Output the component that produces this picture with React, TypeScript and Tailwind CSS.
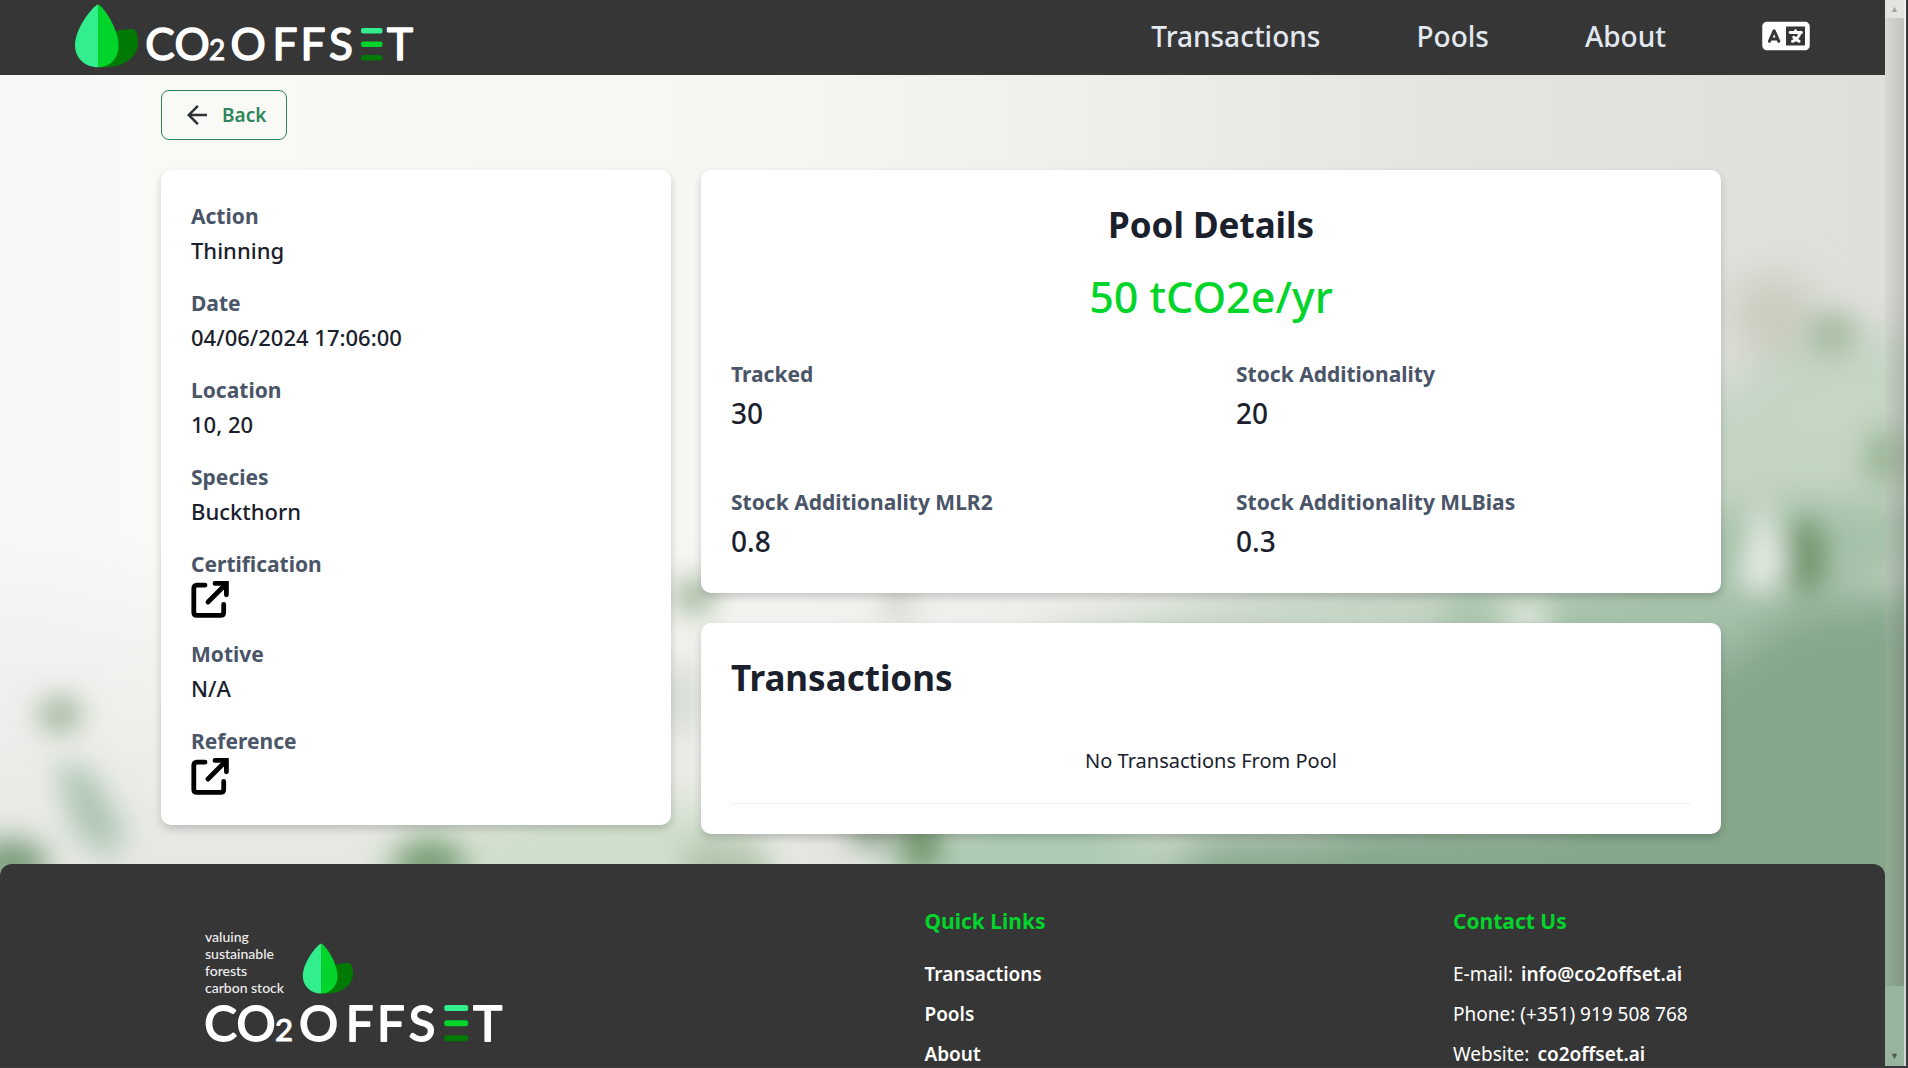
import type { ReactNode } from "react";
import { MdArrowBack } from "react-icons/md";
import { FaLanguage } from "react-icons/fa6";

function Backdrop() {
  return (
    <svg
      aria-hidden="true"
      className="absolute inset-0 h-full w-full"
      viewBox="0 0 1908 1068"
      preserveAspectRatio="none"
    >
      <defs>
        <linearGradient id="sky" x1="0" y1="0" x2="1" y2="0">
          <stop offset="0" stopColor="#f6f7f7" />
          <stop offset="0.08" stopColor="#f9f9f6" />
          <stop offset="0.4" stopColor="#f6f6f2" />
          <stop offset="0.6" stopColor="#edeeea" />
          <stop offset="0.75" stopColor="#e3e5e0" />
          <stop offset="1" stopColor="#dedfda" />
        </linearGradient>
        <linearGradient id="mist" x1="0" y1="0" x2="0" y2="1">
          <stop offset="0.5" stopColor="#e6e8e2" stopOpacity="0" />
          <stop offset="0.82" stopColor="#e4e7e1" stopOpacity="1" />
        </linearGradient>
        <filter id="b12" x="-50%" y="-50%" width="200%" height="200%">
          <feGaussianBlur stdDeviation="14" />
        </filter>
        <filter id="b24" x="-50%" y="-50%" width="200%" height="200%">
          <feGaussianBlur stdDeviation="22" />
        </filter>
      </defs>
      <rect width="1908" height="1068" fill="url(#sky)" />
      <rect width="1908" height="1068" fill="url(#mist)" />
      <g filter="url(#b24)">
        <path d="M1980 320 L1900 335 L1820 325 L1720 390 L1600 430 L1400 560 L1040 640 L950 900 L1980 900Z" fill="#c5d5c4" />
        <path d="M380 850 L620 790 L760 830 L760 900 L380 900Z" fill="#cfdfca" />
        <path d="M900 840 L1060 780 L1200 900 L880 900Z" fill="#aecab2" />
        <path d="M1980 500 L1770 500 L1700 520 L1600 580 L1440 620 L1300 900 L1980 900Z" fill="#a6c1a9" />
        <path d="M1980 595 L1800 610 L1720 660 L1560 820 L1200 840 L1150 920 L1300 1150 L1980 1150Z" fill="#86a78b" />
        <ellipse cx="1775" cy="315" rx="42" ry="40" fill="#c9cbbc" />
      </g>
      <g filter="url(#b12)">
        <ellipse cx="1834" cy="335" rx="24" ry="22" fill="#a4ba9f" />
        <path d="M1800 400 Q1840 365 1900 380 L1870 440 L1760 440Z" fill="#c4d6c4" />
        <ellipse cx="1888" cy="458" rx="22" ry="30" fill="#9ab694" />
        <ellipse cx="1808" cy="558" rx="19" ry="38" fill="#6d9269" />
        <path d="M1762 490 L1788 560 L1774 594 L1740 588Z" fill="#e8eee6" />
        <path d="M1840 585 L1908 555 L1908 585Z" fill="#bccbb9" />
        <ellipse cx="1528" cy="622" rx="24" ry="24" fill="#d9e5d7" />
        <ellipse cx="1470" cy="615" rx="18" ry="26" fill="#aac4ac" />
        <ellipse cx="695" cy="597" rx="20" ry="18" fill="#9bb394" />
        <ellipse cx="900" cy="605" rx="14" ry="20" fill="#cfd2c8" />
        <ellipse cx="682" cy="700" rx="12" ry="40" fill="#ccd6cb" />
        <ellipse cx="60" cy="716" rx="22" ry="18" fill="#9fb398" />
        <path d="M55 765 L88 768 L125 830 L112 862 L75 835Z" fill="#aec5b4" />
        <ellipse cx="10" cy="866" rx="38" ry="26" fill="#7d9e7e" />
        <ellipse cx="430" cy="868" rx="36" ry="28" fill="#7d9f7a" />
        <path d="M690 840 L760 850 L780 900 L680 900Z" fill="#b2c3ac" />
        <ellipse cx="872" cy="835" rx="28" ry="14" fill="#859e84" />
        <ellipse cx="922" cy="846" rx="20" ry="26" fill="#6d9067" />
        <path d="M790 830 L825 830 L870 880 L810 880Z" fill="#e2e5de" />
      </g>
    </svg>
  );
}

function Leaf({ className }: { className: string }) {
  return (
    <svg aria-hidden="true" className={className} viewBox="0 0 64 64">
      <path d="M24 63.3h8C48 63.3 64 54 64 38.500C64 32 62 25 59 25C54 25 46 26 42 27Z" fill="#007a04" />
      <path d="M24 .5C29 2 44.500 24 44.500 42C44.500 54 36 63.300 24 63.300Z" fill="#02d42b" />
      <path d="M24 .5C19 2 1 24 1 41C1 54 11 63.300 24 63.300Z" fill="#33ee8c" />
    </svg>
  );
}

const LETTERS: [string, number][] = [
  ["C", 14],
  ["O", 46],
  ["O", 102],
  ["F", 139],
  ["F", 167],
  ["S", 195],
  ["T", 254],
];

function Wordmark({ className }: { className: string }) {
  return (
    <svg role="img" aria-label="CO2 Offset" className={"overflow-visible " + className} viewBox="0 0 266 34">
      <g
        fill="#fff"
        stroke="#fff"
        strokeWidth="1.600"
        strokeLinejoin="round"
        textAnchor="middle"
        fontFamily="Lato, sans-serif"
        fontSize="44"
      >
        {LETTERS.map(([letter, x]) => (
          <text key={x} x={x} y="33">
            {letter}
          </text>
        ))}
        <text x="71" y="33" fontSize="28" strokeWidth="1">
          2
        </text>
      </g>
      <rect x="215" y="1" width="21.500" height="5.400" rx="2" fill="#33ee8c" />
      <rect x="215" y="14.500" width="21.500" height="5.400" rx="2" fill="#02d42b" />
      <rect x="215" y="28" width="21.500" height="5.400" rx="2" fill="#007a04" />
    </svg>
  );
}

function ExternalLinkIcon() {
  return (
    <svg
      aria-hidden="true"
      className="h-[37px] w-[38px]"
      viewBox="0 0 38 37"
      fill="none"
      stroke="#000"
      strokeWidth="4.800"
      strokeLinecap="round"
    >
      <path d="M14 4.200H6Q2.800 4.200 2.800 7.400V31.200Q2.800 34.400 6 34.400H29.500Q32.700 34.400 32.700 31.200V23.500" />
      <path d="M17 21L34 4" />
      <path d="M24 2.400H35.400V13.800" />
    </svg>
  );
}

function Card({ children }: { children: ReactNode }) {
  return <section className="rounded-[10px] bg-white p-[30px] shadow-[0_4px_8px_rgba(0,0,0,0.18)]">{children}</section>;
}

function Field({ label, value }: { label: string; value?: string }) {
  return (
    <div>
      <dt className="text-[21px] leading-[33px] font-bold text-[#4a5568]">{label}</dt>
      <dd className="text-[22px] leading-[34px] font-medium">
        {value ?? (
          <a href="#" aria-label={label} className="block w-fit">
            <ExternalLinkIcon />
          </a>
        )}
      </dd>
    </div>
  );
}

function Stat({ label, value }: { label: string; value: string }) {
  return (
    <div>
      <dt className="text-[21px] leading-[34px] font-bold text-[#4a5568]">{label}</dt>
      <dd className="text-[28px] leading-[44px] font-medium">{value}</dd>
    </div>
  );
}

const LINKS = ["Transactions", "Pools", "About"];

export default function App() {
  return (
    <div className="relative isolate flex h-screen overflow-hidden border-r-2 border-b-2 border-[#3a3a3e] font-['Noto_Sans',sans-serif] text-[#1a202c]">
      <Backdrop />
      <div className="relative flex min-w-0 flex-1 flex-col">
        <header className="flex h-[75px] shrink-0 items-center justify-between bg-[#363636] pr-[75px] pb-[3px] pl-[74px]">
          <a href="#" className="flex items-end gap-2">
            <Leaf className="size-[64px]" />
            <Wordmark className="mb-[7px] w-[266px]" />
          </a>
          <nav className="flex items-center gap-24 text-[28px] font-medium text-[#e2e8f0]">
            {LINKS.map((link) => (
              <a key={link} href="#">
                {link}
              </a>
            ))}
            <button type="button" aria-label="Change language" className="text-white">
              <FaLanguage className="h-[38px] w-12" />
            </button>
          </nav>
        </header>

        <main className="pt-[15px] pr-[164px] pb-[30px] pl-[161px]">
          <button
            type="button"
            className="flex h-[50px] items-center gap-[10px] rounded-lg border border-[#2f855a] px-5 text-[19px] font-semibold text-[#2f855a]"
          >
            <MdArrowBack className="size-[30px] text-[#2d3332]" />
            Back
          </button>

          <div className="mt-[30px] grid grid-cols-[1fr_2fr] items-start gap-[30px]">
            <Card>
              <dl className="flex flex-col gap-5">
                <Field label="Action" value="Thinning" />
                <Field label="Date" value="04/06/2024 17:06:00" />
                <Field label="Location" value="10, 20" />
                <Field label="Species" value="Buckthorn" />
                <Field label="Certification" />
                <Field label="Motive" value="N/A" />
                <Field label="Reference" />
              </dl>
            </Card>

            <div className="flex flex-col gap-[30px]">
              <Card>
                <h1 className="text-center text-[35px] leading-[50px] font-bold">Pool Details</h1>
                <p className="mt-3 text-center text-[43px] leading-[70px] font-medium text-[#02d42b]">50 tCO2e/yr</p>
                <dl className="mt-[25px] grid grid-cols-2 gap-[50px]">
                  <Stat label="Tracked" value="30" />
                  <Stat label="Stock Additionality" value="20" />
                  <Stat label="Stock Additionality MLR2" value="0.8" />
                  <Stat label="Stock Additionality MLBias" value="0.3" />
                </dl>
              </Card>

              <Card>
                <h2 className="text-[35px] leading-[50px] font-bold">Transactions</h2>
                <table className="mt-4 w-full">
                  <tbody>
                    <tr className="border-b border-[#edf2f7]">
                      <td className="py-7 text-center text-[20px] leading-[28px]">No Transactions From Pool</td>
                    </tr>
                  </tbody>
                </table>
              </Card>
            </div>
          </div>
        </main>

        <footer className="flex flex-1 shrink-0 justify-between rounded-t-xl bg-[#363636] px-[194px] pt-10 text-[19px] text-white">
          <div className="pt-6 pr-4 pl-[11px]">
            <div className="flex items-end gap-[18px]">
              <p className="font-[Lato,sans-serif] text-[14px] leading-[17px] font-medium text-[#f0f0f0]">
                valuing
                <br />
                sustainable
                <br />
                forests
                <br />
                carbon stock
              </p>
              <Leaf className="mb-[2px] size-[51px]" />
            </div>
            <Wordmark className="mt-2 w-[296px]" />
          </div>

          <div>
            <h3 className="text-[21px] leading-[34px] font-bold text-[#02d42b]">Quick Links</h3>
            <ul className="mt-[21px] flex flex-col gap-[10px] leading-[30px] font-semibold">
              {LINKS.map((link) => (
                <li key={link}>
                  <a href="#">{link}</a>
                </li>
              ))}
            </ul>
          </div>

          <div className="min-w-[238px]">
            <h3 className="text-[21px] leading-[34px] font-bold text-[#02d42b]">Contact Us</h3>
            <ul className="mt-[21px] flex flex-col gap-[10px] leading-[30px]">
              <li className="flex gap-2">
                E-mail:
                <a href="#" className="font-semibold">
                  info@co2offset.ai
                </a>
              </li>
              <li>Phone: (+351) 919 508 768</li>
              <li className="flex gap-2">
                Website:
                <a href="#" className="font-semibold">
                  co2offset.ai
                </a>
              </li>
            </ul>
          </div>
        </footer>
      </div>

      <div
        aria-hidden="true"
        className="relative flex w-[21px] shrink-0 flex-col items-center border-r-2 border-white/50 bg-white/15"
      >
        <span className="flex h-[18px] items-center text-[9px] text-black/30">▲</span>
        <span className="w-full flex-1 bg-linear-to-r from-black/5 to-black/15" />
        <span className="flex h-20 items-end pb-1 text-[9px] text-black/50">▼</span>
      </div>
    </div>
  );
}
